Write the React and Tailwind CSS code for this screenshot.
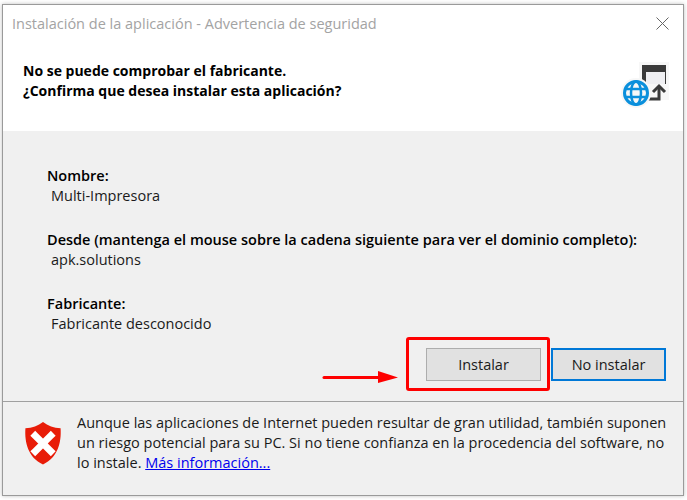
const font = { fontFamily: '"Open Sans", "Noto Sans", sans-serif' };

function AppIcon() {
  return (
    <svg width="48" height="50" viewBox="0 0 48 50" className="shrink-0">
      <rect x="18" y="2" width="30" height="38" fill="#f7f7f7" />
      <rect x="21" y="5" width="24" height="19" fill="#3a3a3a" />
      <rect x="25" y="12" width="19" height="12" fill="#efeff2" />
      <path d="M27 39h11V27" fill="none" stroke="#3a3a3a" strokeWidth="3" />
      <path d="M32 32l6-6 6 6" fill="none" stroke="#3a3a3a" strokeWidth="3" />
      <circle cx="15" cy="33" r="15" fill="#f7f7f7" />
      <circle cx="15" cy="33" r="11.500" fill="none" stroke="#0a8fdc" strokeWidth="3" />
      <ellipse cx="15" cy="33" rx="5" ry="11.500" fill="none" stroke="#0a8fdc" strokeWidth="2.500" />
      <path d="M4 29h22M4 37h22" stroke="#0a8fdc" strokeWidth="2.500" />
    </svg>
  );
}

function ShieldIcon() {
  return (
    <svg width="38" height="43" viewBox="0 0 38 44" className="shrink-0 mt-[20px]">
      <path d="M19 0c5 4 11 6 18 6.500 1 15-3 30-18 37C4 36.500 0 21.500 1 6.500 8 6 14 4 19 0z" fill="#e81c08" />
      <path d="M11 14l8 8 8-8M11 30l8-8 8 8" fill="none" stroke="#fff" strokeWidth="7" strokeLinecap="square" />
    </svg>
  );
}

function Field({ label, value }) {
  return (
    <div>
      <div className="font-semibold leading-[20px] text-black">{label}</div>
      <div className="pl-1 leading-[20px] text-[#1a1a1a]">{value}</div>
    </div>
  );
}

export default function App() {
  return (
    <div className="w-[687px] h-[500px] overflow-hidden bg-white pt-1 pl-[2px] pr-[3px] pb-1" style={font}>
      <div className="flex flex-col h-full border border-[#9a9a9a] bg-[#f0f0f0] text-[14.5px] shadow-[0_0_4px_rgba(0,0,0,0.25)]">
        <div className="bg-white h-[126px] shrink-0">
          <div className="flex items-center justify-between h-[37px] pl-[9px] pr-[14px]">
            <span className="text-[#a3a3a3]">Instalación de la aplicación - Advertencia de seguridad</span>
            <svg width="13" height="13" viewBox="0 0 13 13">
              <path d="M.5.500l12 12M12.500.500l-12 12" stroke="#666" strokeWidth="1" fill="none" />
            </svg>
          </div>
          <div className="flex justify-between pl-5 pr-[14px]">
            <div className="pt-[19px] text-[14px] font-bold leading-[20px] text-black">
              <div>No se puede comprobar el fabricante.</div>
              <div>¿Confirma que desea instalar esta aplicación?</div>
            </div>
            <div className="mt-[18px]">
              <AppIcon />
            </div>
          </div>
        </div>

        <div className="flex flex-col flex-1 pl-11 pt-[35px] gap-[24px]">
          <Field label="Nombre:" value="Multi-Impresora" />
          <Field label="Desde (mantenga el mouse sobre la cadena siguiente para ver el dominio completo):" value="apk.solutions" />
          <Field label="Fabricante:" value="Fabricante desconocido" />
        </div>

        <div className="flex justify-end items-start pt-[13px] pr-[17px] h-[66px] shrink-0">
          <div className="relative mr-[10px]">
            <button className="block w-[115px] h-[33px] border border-[#adadad] bg-[#e1e1e1] text-[#1a1a1a]">Instalar</button>
            <div className="absolute -left-[20px] -top-[11px] w-[144px] h-[54px] border-[3px] border-[#fe0000] rounded-[3px]" />
            <svg width="78" height="14" viewBox="0 0 78 14" className="absolute -left-[104px] top-[22px]">
              <path d="M2 7.500 H58" stroke="#fe0000" strokeWidth="3" strokeLinecap="round" />
              <path d="M56 1 L76 7.500 L56 13 z" fill="#fe0000" />
            </svg>
          </div>
          <button className="w-[115px] h-[33px] border-2 border-[#0078d7] bg-[#e1e1e1] text-[#1a1a1a]">No instalar</button>
        </div>

        <div className="flex items-start gap-[15px] h-[94px] shrink-0 border-t border-[#a0a0a0] pl-[21px] pr-[14px]">
          <ShieldIcon />
          <p className="mt-[11px] leading-[20px] text-[#1a1a1a]">
            Aunque las aplicaciones de Internet pueden resultar de gran utilidad, también suponen un riesgo potencial para su PC. Si no tiene confianza en la procedencia del software, no lo instale.{" "}
            <a className="text-[#0000ee] underline">Más información...</a>
          </p>
        </div>
      </div>
    </div>
  );
}
